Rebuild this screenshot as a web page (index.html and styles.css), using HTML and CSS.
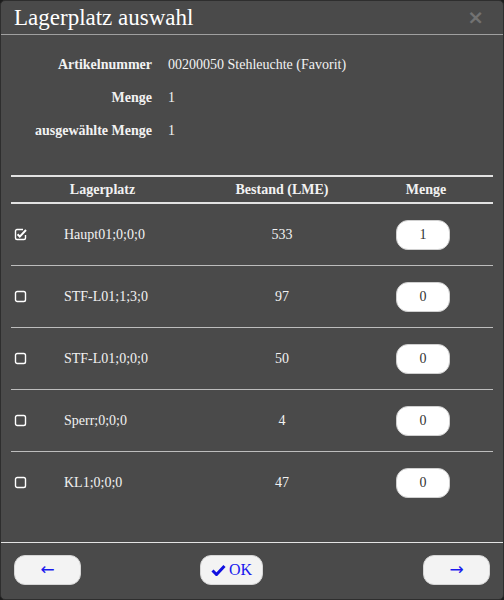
FILE: index.html
```html
<!DOCTYPE html>
<html lang="de">
<head>
<meta charset="utf-8">
<title>Lagerplatz auswahl</title>
<link rel="stylesheet" href="styles.css">
</head>
<body>
<div class="dialog">
  <div class="header">
    <span class="title">Lagerplatz auswahl</span>
    <span class="close">×</span>
  </div>
  <div class="info">
    <div class="lbl">Artikelnummer</div><div class="val">00200050 Stehleuchte (Favorit)</div>
    <div class="lbl">Menge</div><div class="val">1</div>
    <div class="lbl">ausgewählte Menge</div><div class="val">1</div>
  </div>
  <div class="tbl">
    <div class="row head">
      <div></div>
      <div class="h-lager">Lagerplatz</div>
      <div class="c">Bestand (LME)</div>
      <div class="h-menge">Menge</div>
      <div></div>
    </div>
    <div class="row">
      <div class="cb"><svg width="13" height="13" viewBox="0 0 13 13"><path d="M9 1.5H3a1.5 1.5 0 0 0-1.5 1.5v7a1.5 1.5 0 0 0 1.5 1.5h7a1.5 1.5 0 0 0 1.5-1.5V7" fill="none" stroke="#fff" stroke-width="1.4"/><path d="M3.6 6.2l2.2 2.4 6.2-6.6" fill="none" stroke="#fff" stroke-width="2"/></svg></div>
      <div class="lager">Haupt01;0;0;0</div>
      <div class="c">533</div>
      <div class="m"><span class="inp">1</span></div>
      <div></div>
    </div>
    <div class="row">
      <div class="cb"><svg width="13" height="13" viewBox="0 0 13 13"><rect x="1.5" y="1.5" width="10" height="10" rx="1.8" fill="none" stroke="#fff" stroke-width="1.4"/></svg></div>
      <div class="lager">STF-L01;1;3;0</div>
      <div class="c">97</div>
      <div class="m"><span class="inp">0</span></div>
      <div></div>
    </div>
    <div class="row">
      <div class="cb"><svg width="13" height="13" viewBox="0 0 13 13"><rect x="1.5" y="1.5" width="10" height="10" rx="1.8" fill="none" stroke="#fff" stroke-width="1.4"/></svg></div>
      <div class="lager">STF-L01;0;0;0</div>
      <div class="c">50</div>
      <div class="m"><span class="inp">0</span></div>
      <div></div>
    </div>
    <div class="row">
      <div class="cb"><svg width="13" height="13" viewBox="0 0 13 13"><rect x="1.5" y="1.5" width="10" height="10" rx="1.8" fill="none" stroke="#fff" stroke-width="1.4"/></svg></div>
      <div class="lager">Sperr;0;0;0</div>
      <div class="c">4</div>
      <div class="m"><span class="inp">0</span></div>
      <div></div>
    </div>
    <div class="row last">
      <div class="cb"><svg width="13" height="13" viewBox="0 0 13 13"><rect x="1.5" y="1.5" width="10" height="10" rx="1.8" fill="none" stroke="#fff" stroke-width="1.4"/></svg></div>
      <div class="lager">KL1;0;0;0</div>
      <div class="c">47</div>
      <div class="m"><span class="inp">0</span></div>
      <div></div>
    </div>
  </div>
  <div class="footer">
    <span class="btn arrow">←</span>
    <span class="btn ok"><svg width="15" height="12" viewBox="0 0 15 12"><path d="M1.5 6.5l4 4L13.5 2" fill="none" stroke="#1010e0" stroke-width="3"/></svg>OK</span>
    <span class="btn arrow right">→</span>
  </div>
</div>
</body>
</html>
```
FILE: styles.css
```css
html, body {
  margin: 0;
  padding: 0;
  background: #1c1c1c;
}
body, .dialog, .title, .info, .tbl, .ok {
  font-family: "Liberation Serif", "DejaVu Serif", serif;
}
body {
  color: #f2f2f2;
}
.dialog {
  box-sizing: border-box;
  width: 504px;
  height: 600px;
  background: #4a4a4a;
  border: 1px solid #2e2e2e;
  border-radius: 5px;
  display: flex;
  flex-direction: column;
  overflow: hidden;
}
.header {
  display: flex;
  justify-content: space-between;
  align-items: center;
  padding: 5px 14px 5px 13px;
  border-bottom: 1px solid #a0a0a0;
}
.title {
  font-size: 23px;
  line-height: 23px;
  color: #ffffff;
}
.close {
  font-family: "DejaVu Sans", sans-serif;
  font-size: 20px;
  line-height: 23px;
  font-weight: bold;
  color: #727272;
  margin-right: 5px;
}
.info {
  display: grid;
  grid-template-columns: 141px 1fr;
  grid-auto-rows: 33px;
  column-gap: 16px;
  padding: 13px 10px 0;
  font-size: 14px;
  align-items: center;
}
.lbl {
  font-weight: bold;
  text-align: right;
}
.tbl {
  margin: 28px 10px 0;
  border-top: 2px solid #e2e2e2;
  font-size: 14px;
}
.row {
  display: grid;
  grid-template-columns: 42px 115px 228px 54px 1fr;
  align-items: center;
  height: 61px;
  border-bottom: 1px solid #bdbdbd;
}
.row.last {
  border-bottom: none;
}
.row.head {
  height: 25px;
  border-bottom: 2px solid #e2e2e2;
  font-weight: bold;
}
.h-lager {
  text-align: center;
  padding-right: 16px;
}
.h-menge {
  margin-left: 6px;
  text-align: center;
  white-space: nowrap;
}
.c {
  text-align: center;
}
.cb {
  padding-left: 3px;
  display: flex;
  align-items: center;
}
.lager {
  padding-left: 11px;
}
.m {
  display: flex;
}
.inp {
  width: 54px;
  height: 30px;
  box-sizing: border-box;
  background: #ffffff;
  border-radius: 12px;
  border: 1px solid #d0d0d0;
  color: #333;
  display: flex;
  align-items: center;
  justify-content: center;
  font-size: 14px;
}
.footer {
  margin-top: 29px;
  border-top: 1px solid #e4e4e4;
  padding: 12px 13px 0 13px;
  display: flex;
  align-items: center;
}
.btn {
  box-sizing: border-box;
  height: 30px;
  background: #f3f3f3;
  border: 1px solid #d6d6d6;
  border-radius: 11px;
  color: #1a1aee;
  display: flex;
  align-items: center;
  justify-content: center;
  font-size: 16px;
}
.arrow {
  width: 67px;
  font-family: "DejaVu Sans", sans-serif;
  font-size: 17px;
  padding-bottom: 2px;
}
.ok {
  width: 63px;
  margin-left: 119px;
  gap: 3px;
}
.right {
  margin-left: auto;
}
```
